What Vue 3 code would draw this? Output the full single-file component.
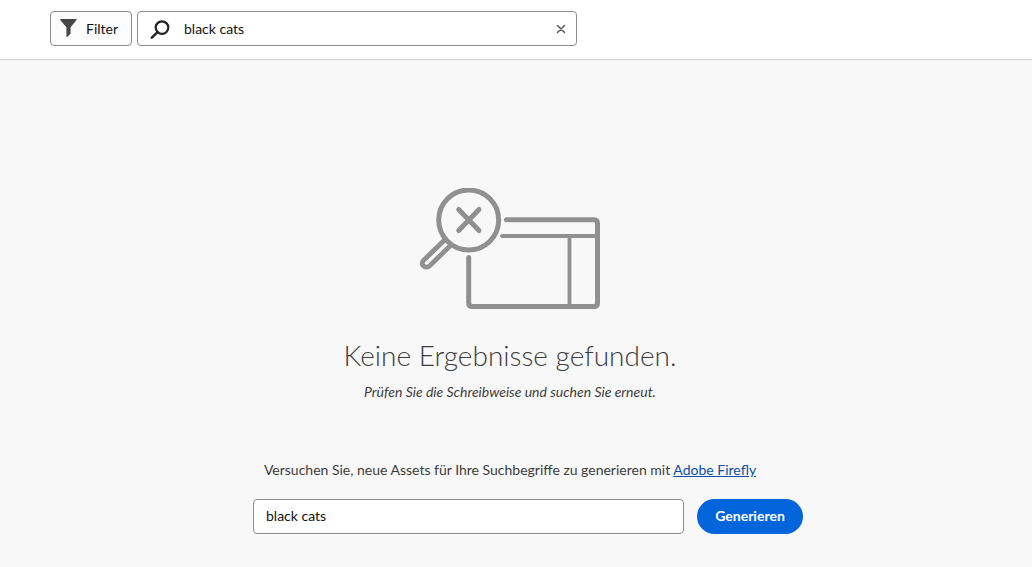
<script setup>
import { ref } from 'vue'

const query = ref('black cats')
const prompt = ref('black cats')
</script>

<template>
  <div class="page">
    <header class="toolbar">
      <button type="button" class="filter">
        <svg width="18" height="20" viewBox="0 0 18 20" aria-hidden="true">
          <path d="M1 0h15.200q.8.400.3 1L10.600 8.300v6.500L7.100 18q-.7.300-.7-.6V8.300L.2 1Q-.2.300 1 0z" fill="#464646" />
        </svg>
        <span>Filter</span>
      </button>
      <form class="search" role="search" @submit.prevent>
        <svg class="glass" width="20" height="20" viewBox="0 0 20 20" aria-hidden="true">
          <circle cx="12" cy="8.600" r="6.300" fill="none" stroke="#222" stroke-width="2.200" />
          <path d="M7.600 13.200L1.800 18.600" stroke="#222" stroke-width="2.500" stroke-linecap="round" />
        </svg>
        <input v-model="query" type="text" aria-label="Suchen" />
        <button type="button" class="clear" aria-label="Suche löschen" @click="query = ''">
          <svg width="10" height="10" viewBox="0 0 10 10" aria-hidden="true">
            <path d="M1.500 1.500l7 7M8.500 1.500l-7 7" stroke="#5c5c5c" stroke-width="1.500" stroke-linecap="round" />
          </svg>
        </button>
      </form>
    </header>

    <main class="results">
      <svg class="illustration" width="180" height="122" viewBox="0 0 180 122" aria-hidden="true">
        <g fill="none" stroke="#909090" stroke-width="5" stroke-linecap="round" stroke-linejoin="round">
          <circle cx="48.700" cy="32" r="30" />
          <path d="M38.700 21.500l20.300 21M59 21.500l-20.300 21" />
          <path d="M86.500 31.800H174q3.500 0 3.500 3.500V115q0 3.500-3.500 3.500H52.200q-3.500 0-3.500-3.500V69.500" />
          <path d="M82 48h95M149.500 48v70" stroke-width="3.800" />
          <path d="M24 52.500L3.500 72.500q-2.500 3.500 0 5.500q3.500 2.500 6.500-.5L30.500 57.500" stroke-width="4.800" />
        </g>
      </svg>
      <h1>Keine Ergebnisse gefunden.</h1>
      <p class="hint">Prüfen Sie die Schreibweise und suchen Sie erneut.</p>
      <p class="suggestion">
        Versuchen Sie, neue Assets für Ihre Suchbegriffe zu generieren mit <a href="#">Adobe Firefly</a>
      </p>
      <form class="generate" @submit.prevent>
        <input v-model="prompt" type="text" aria-label="Suchbegriffe" />
        <button type="submit">Generieren</button>
      </form>
    </main>
  </div>
</template>

<style>
body {
  margin: 0;
  background: #f8f8f8;
}
</style>

<style scoped>
.page {
  min-height: 100vh;
  background: #f8f8f8;
  color: #3c3c3c;
  font: 14px/20px Lato, sans-serif;
}
.page * {
  box-sizing: border-box;
}
input,
button {
  font: inherit;
  color: #111;
}
.toolbar {
  display: flex;
  gap: 5px;
  padding: 11px 50px 13px;
  background: #fff;
  border-bottom: 1px solid #d3d3d3;
}
.filter {
  display: flex;
  align-items: center;
  gap: 8px;
  width: 82px;
  height: 35px;
  padding: 0 9px;
  border: 1px solid #8c8c8c;
  border-radius: 4px;
  background: #fcfcfc;
}
.filter svg,
.glass {
  flex: none;
}
.search {
  display: flex;
  align-items: center;
  flex: 0 1 440px;
  height: 35px;
  padding: 0 10px 0 12px;
  border: 1px solid #8c8c8c;
  border-radius: 4px;
  background: #fff;
}
.search input {
  flex: 1;
  min-width: 0;
  padding: 0 0 0 14px;
  border: 0;
  outline: 0;
  background: none;
}
.clear {
  display: flex;
  padding: 0;
  border: 0;
  background: none;
}
.results {
  display: flex;
  flex-direction: column;
  align-items: center;
  padding: 128px 24px 33px 12px;
}
.illustration {
  display: block;
}
h1 {
  margin: 25px 0 0;
  font-size: 28px;
  line-height: 40px;
  font-weight: 300;
}
.hint {
  margin: 7px 0 0;
  font-style: italic;
}
.suggestion {
  margin: 58px 0 0;
}
.suggestion a {
  color: #0d4ea8;
  text-decoration: underline;
}
.generate {
  display: flex;
  gap: 13px;
  width: 100%;
  max-width: 586px;
  margin-top: 19px;
  padding-left: 36px;
}
.generate input {
  flex: 1;
  min-width: 0;
  height: 35px;
  padding: 0 12px 2px;
  border: 1px solid #8c8c8c;
  border-radius: 4px;
  background: #fff;
}
.generate button {
  width: 106px;
  height: 35px;
  padding: 0 0 2px;
  border: 0;
  border-radius: 18px;
  background: #0265dc;
  color: #fff;
  font-weight: 700;
}
</style>
